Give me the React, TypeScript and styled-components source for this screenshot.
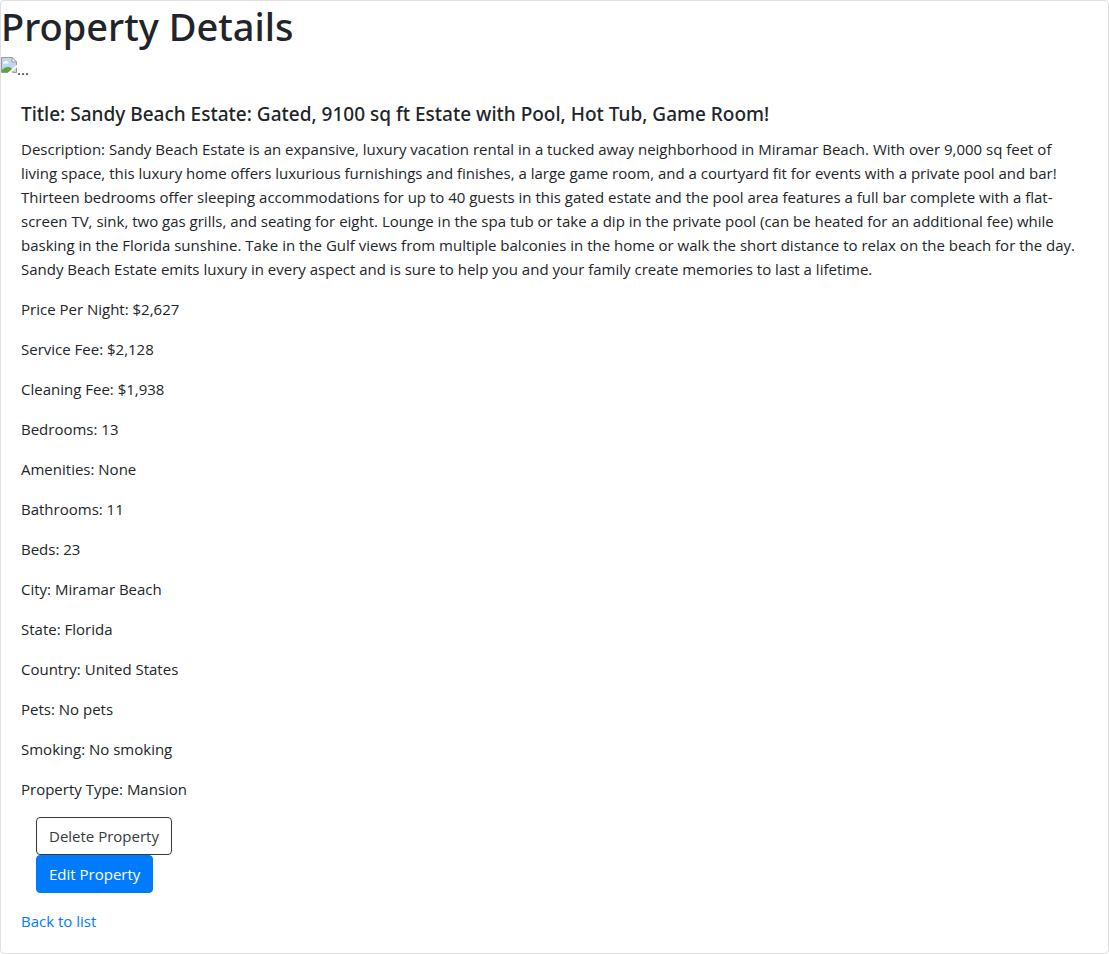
import React from "react";
import styled, { createGlobalStyle } from "styled-components";

const GlobalStyle = createGlobalStyle`
  *, *::before, *::after { box-sizing: border-box; }
  body {
    margin: 0;
    background: #fff;
    color: #212529;
    font-family: "Segoe UI", "Open Sans", "Noto Sans", sans-serif;
    font-size: 15px;
    font-weight: 400;
    line-height: 24px;
  }
`;

const Card = styled.main`
  display: flex;
  flex-direction: column;
  border: 1px solid #dfdfdf;
  border-radius: 4px;
  background: #fff;
`;

const PageTitle = styled.h1`
  margin: 0 0 6px;
  font-family: "Segoe UI", "Noto Sans", sans-serif;
  font-size: 38px;
  font-weight: 500;
  line-height: 50px;
`;

const MissingImage = styled.div`
  display: flex;
  height: 24px;
`;

const CardBody = styled.section`
  padding: 20px;
`;

const CardTitle = styled.h5`
  margin: 0 0 10px;
  font-family: "Segoe UI", "Noto Sans", sans-serif;
  font-size: 19px;
  font-weight: 500;
  line-height: 26px;
`;

const CardText = styled.p`
  margin: 0 0 16px;
`;

const Actions = styled.div`
  display: flex;
  flex-direction: column;
  align-items: flex-start;
  margin-bottom: 16px;
  padding: 0 15px;
`;

const Button = styled.button<{ $primary?: boolean }>`
  padding: 6px 12px;
  border: 1px solid ${(p) => (p.$primary ? "#007bff" : "#343a40")};
  border-radius: 4px;
  background: ${(p) => (p.$primary ? "#007bff" : "transparent")};
  color: ${(p) => (p.$primary ? "#fff" : "#343a40")};
  font: inherit;
  cursor: pointer;
`;

const BackLink = styled.a`
  display: block;
  width: fit-content;
  color: #007bff;
  text-decoration: none;
`;

const details: [string, string][] = [
  ["Price Per Night", "$2,627"],
  ["Service Fee", "$2,128"],
  ["Cleaning Fee", "$1,938"],
  ["Bedrooms", "13"],
  ["Amenities", "None"],
  ["Bathrooms", "11"],
  ["Beds", "23"],
  ["City", "Miramar Beach"],
  ["State", "Florida"],
  ["Country", "United States"],
  ["Pets", "No pets"],
  ["Smoking", "No smoking"],
  ["Property Type", "Mansion"],
];

const BrokenImageIcon = () => (
  <svg width="16" height="16" viewBox="0 0 16 16" aria-hidden="true">
    <path d="M0.5 0.5H11L15.5 5V15.5H0.5Z" fill="#c3d5f5" />
    <path d="M2 6.2C2 5 3 4.8 3.5 5C4 3.4 6.4 3.6 6.5 5C7.6 4.9 7.8 6.2 7.4 6.5H2.2Z" fill="#fff" />
    <path d="M1 15V13C3 10.500 6 9.500 8 10C10 10.500 11.500 12 12.500 15Z" fill="#58a835" />
    <path d="M16 7.500V10L10 16H6.500Z" fill="#fff" />
    <path d="M15.500 8V5L11 0.500H0.500V15.500H7M11.500 15.500H15.500V11" fill="none" stroke="#9a9a9a" />
    <path d="M11 0.500V5H15.500Z" fill="#fff" stroke="#9a9a9a" />
  </svg>
);

export default function App() {
  return (
    <>
      <GlobalStyle />
      <Card>
        <PageTitle>Property Details</PageTitle>
        <MissingImage>
          <BrokenImageIcon />
          <span>...</span>
        </MissingImage>
        <CardBody>
          <CardTitle>
            Title: Sandy Beach Estate: Gated, 9100 sq ft Estate with Pool, Hot Tub, Game Room!
          </CardTitle>
          <CardText>
            Description: Sandy Beach Estate is an expansive, luxury vacation rental in a tucked away
            neighborhood in Miramar Beach. With over 9,000 sq feet of living space, this luxury home
            offers luxurious furnishings and finishes, a large game room, and a courtyard fit for
            events with a private pool and bar! Thirteen bedrooms offer sleeping accommodations for
            up to 40 guests in this gated estate and the pool area features a full bar complete with
            a flat-screen TV, sink, two gas grills, and seating for eight. Lounge in the spa tub or
            take a dip in the private pool (can be heated for an additional fee) while basking in the
            Florida sunshine. Take in the Gulf views from multiple balconies in the home or walk the
            short distance to relax on the beach for the day. Sandy Beach Estate emits luxury in
            every aspect and is sure to help you and your family create memories to last a lifetime.
          </CardText>
          {details.map(([label, value]) => (
            <CardText key={label}>{`${label}: ${value}`}</CardText>
          ))}
          <Actions>
            <Button type="button">Delete Property</Button>
            <Button type="button" $primary>
              Edit Property
            </Button>
          </Actions>
          <BackLink href="#list">Back to list</BackLink>
        </CardBody>
      </Card>
    </>
  );
}
